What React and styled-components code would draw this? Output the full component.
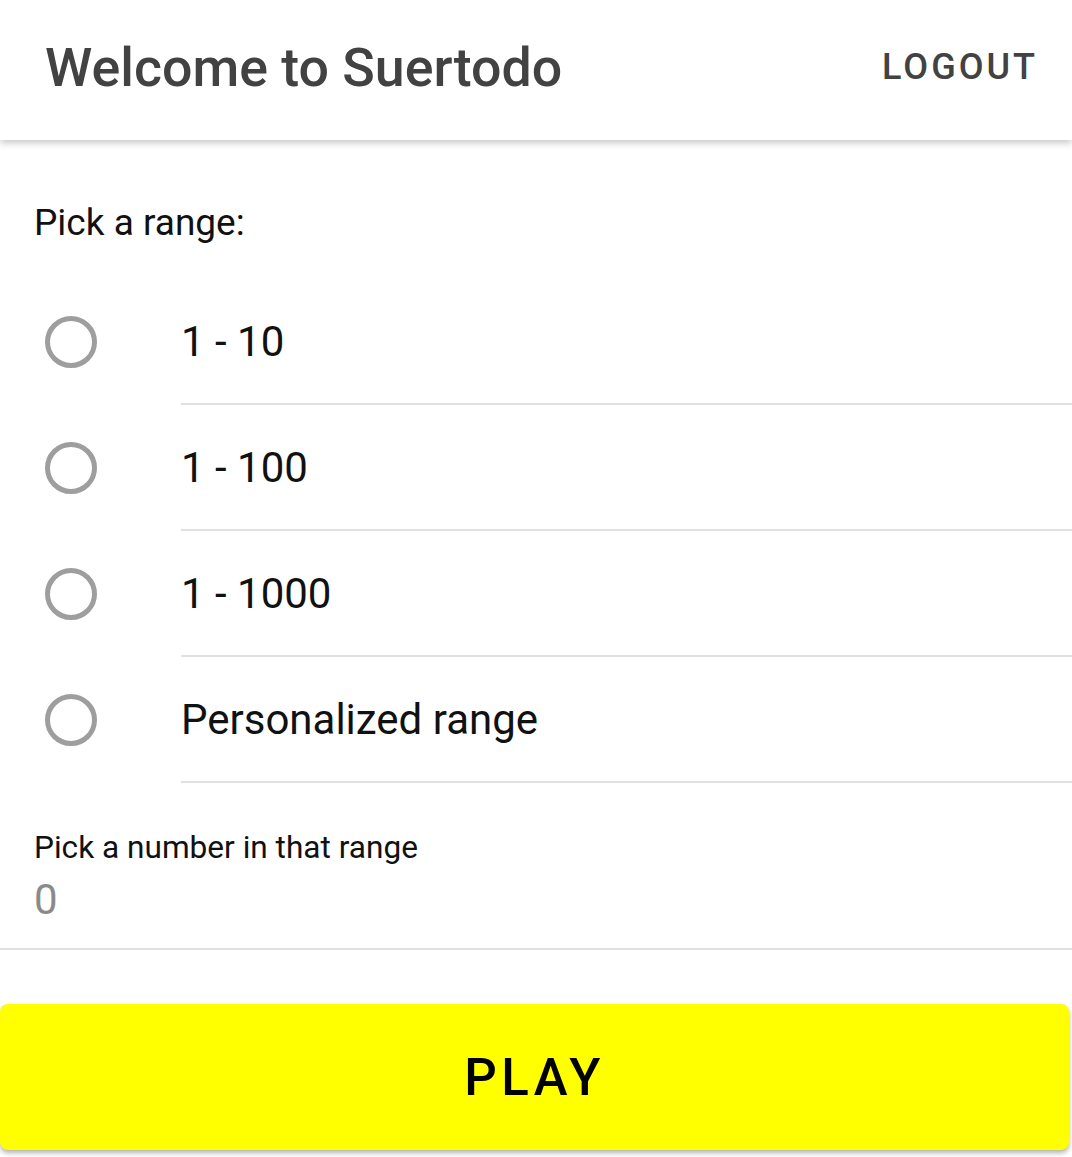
import React, { useState } from "react";
import styled, { createGlobalStyle } from "styled-components";

const GlobalStyle = createGlobalStyle`
    body {
        margin: 0;
        background: #ffffff;
        font-family: Roboto, "Noto Sans", sans-serif;
    }
    * {
        box-sizing: border-box;
    }
`;

const Page = styled.div`
    width: 100%;
    min-height: 1157px;
    display: flex;
    flex-direction: column;
`;

const Header = styled.header`
    position: relative;
    z-index: 1;
    height: 140px;
    padding: 0 34px 0 45px;
    display: flex;
    align-items: center;
    justify-content: space-between;
    background: #ffffff;
    box-shadow: 0 3px 7px rgba(0, 0, 0, 0.22);
`;

const Title = styled.h1`
    margin: 0 0 6px 0;
    font-size: 53.7px;
    font-weight: 500;
    color: #424242;
`;

const Logout = styled.button`
    margin: 0 0 6px 0;
    padding: 0;
    border: none;
    background: none;
    font-family: Roboto, sans-serif;
    font-size: 36px;
    font-weight: 500;
    letter-spacing: 3px;
    color: #424242;
`;

const Section = styled.section`
    display: flex;
    flex-direction: column;
`;

const SectionLabel = styled.p`
    margin: 61px 0 35px 0;
    padding-left: 34px;
    font-size: 37px;
    line-height: 43px;
    color: #111111;
`;

const Row = styled.label`
    height: 126px;
    display: flex;
    align-items: stretch;
    cursor: pointer;
`;

const RadioCol = styled.div`
    width: 181px;
    padding-left: 45px;
    display: flex;
    align-items: center;
`;

const Radio = styled.span`
    width: 52px;
    height: 52px;
    border-radius: 50%;
    border: 5px solid #9e9e9e;
    display: flex;
    align-items: center;
    justify-content: center;

    &::after {
        content: "";
        width: 26px;
        height: 26px;
        border-radius: 50%;
        background: ${(p) => (p.$checked ? "#9e9e9e" : "transparent")};
    }
`;

const RowText = styled.div`
    flex: 1;
    display: flex;
    align-items: center;
    border-bottom: 2px solid #e0e0e0;
    font-size: 42px;
    color: #111111;
`;

const Field = styled.div`
    margin-top: 46px;
    border-bottom: 2px solid #e0e0e0;
    padding: 0 0 24px 34px;
    display: flex;
    flex-direction: column;
`;

const FieldLabel = styled.span`
    font-size: 31.6px;
    line-height: 37px;
    color: #111111;
`;

const FieldInput = styled.input`
    margin-top: 9px;
    padding: 0;
    border: none;
    outline: none;
    background: transparent;
    font-family: Roboto, sans-serif;
    font-size: 42px;
    line-height: 49px;
    height: 49px;
    color: #8a8a8a;
`;

const PlayButton = styled.button`
    margin-top: 54px;
    width: calc(100% - 3px);
    height: 146px;
    padding: 0;
    border: none;
    border-radius: 8px;
    background: #ffff00;
    box-shadow: 0 3px 5px rgba(0, 0, 0, 0.3);
    font-family: Roboto, sans-serif;
    font-size: 51px;
    font-weight: 500;
    letter-spacing: 4.5px;
    color: #000000;
`;

const ranges = ["1 - 10", "1 - 100", "1 - 1000", "Personalized range"];

export default function App() {
    const [picked, setPicked] = useState(null);

    return (
        <>
            <GlobalStyle />
            <Page>
                <Header>
                    <Title>Welcome to Suertodo</Title>
                    <Logout>LOGOUT</Logout>
                </Header>

                <Section>
                    <SectionLabel>Pick a range:</SectionLabel>
                    {ranges.map((r, i) => (
                        <Row key={r} onClick={() => setPicked(i)}>
                            <RadioCol>
                                <Radio $checked={picked === i} />
                            </RadioCol>
                            <RowText>{r}</RowText>
                        </Row>
                    ))}
                </Section>

                <Field>
                    <FieldLabel>Pick a number in that range</FieldLabel>
                    <FieldInput type="text" defaultValue="0" />
                </Field>

                <PlayButton>PLAY</PlayButton>
            </Page>
        </>
    );
}
